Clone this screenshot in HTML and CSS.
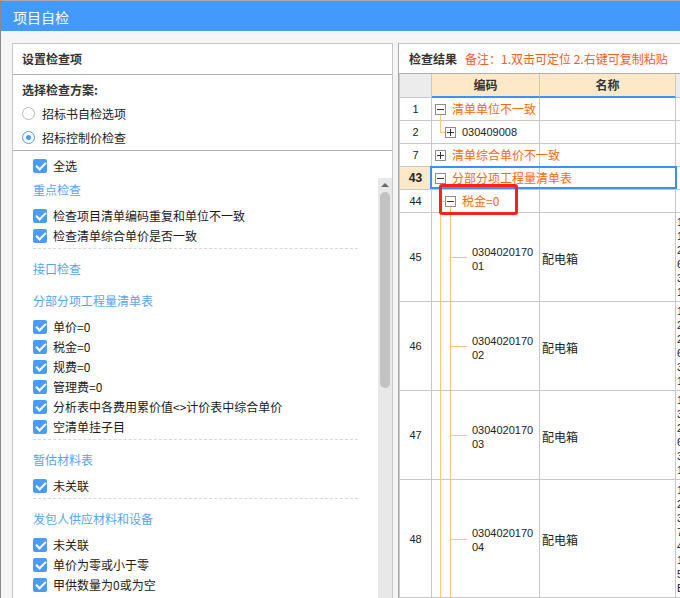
FILE: index.html
```html
<!DOCTYPE html>
<html lang="zh-CN">
<head>
<meta charset="utf-8">
<title>项目自检</title>
<link rel="stylesheet" href="styles.css">
</head>
<body>
<div class="window">
  <div class="titlebar">项目自检</div>
  <div class="main">
    <section class="panel left">
      <div class="panel-head lhead">设置检查项</div>
      <div class="scheme">
        <div class="scheme-title">选择检查方案:</div>
        <label class="radio-row first"><span class="radio"></span>招标书自检选项</label>
        <label class="radio-row"><span class="radio on"></span>招标控制价检查</label>
      </div>
      <div class="all-row">
        <label class="check"><span class="cb"></span>全选</label>
      </div>
      <div class="scroll">
        <div class="scroll-content">
          <div class="group-title">重点检查</div>
          <div class="items">
            <label class="check"><span class="cb"></span>检查项目清单编码重复和单位不一致</label>
            <label class="check"><span class="cb"></span>检查清单综合单价是否一致</label>
          </div>
          <div class="sep"></div>
          <div class="group-title solo">接口检查</div>
          <div class="group-title">分部分项工程量清单表</div>
          <div class="items">
            <label class="check"><span class="cb"></span>单价=0</label>
            <label class="check"><span class="cb"></span>税金=0</label>
            <label class="check"><span class="cb"></span>规费=0</label>
            <label class="check"><span class="cb"></span>管理费=0</label>
            <label class="check"><span class="cb"></span>分析表中各费用累价值&lt;&gt;计价表中综合单价</label>
            <label class="check"><span class="cb"></span>空清单挂子目</label>
          </div>
          <div class="sep"></div>
          <div class="group-title">暂估材料表</div>
          <div class="items">
            <label class="check"><span class="cb"></span>未关联</label>
          </div>
          <div class="sep"></div>
          <div class="group-title">发包人供应材料和设备</div>
          <div class="items">
            <label class="check"><span class="cb"></span>未关联</label>
            <label class="check"><span class="cb"></span>单价为零或小于零</label>
            <label class="check"><span class="cb"></span>甲供数量为0或为空</label>
          </div>
        </div>
        <div class="scrollbar">
          <div class="arrow-up"></div>
          <div class="thumb"></div>
        </div>
      </div>
    </section>

    <section class="panel right">
      <div class="panel-head rhead">检查结果<span class="note">备注：1.双击可定位 2.右键可复制粘贴</span></div>
      <div class="grid">
        <div class="row head">
          <div class="c num"></div>
          <div class="c hcell">编码</div>
          <div class="c hcell">名称</div>
          <div class="c extra"></div>
        </div>

        <div class="row">
          <div class="c num">1</div>
          <div class="c code lv1">
            <i class="vl l1 below"></i>
            <span class="tb"></span><span class="warn">清单单位不一致</span>
          </div>
          <div class="c name"></div>
          <div class="c extra"></div>
        </div>

        <div class="row">
          <div class="c num">2</div>
          <div class="c code lv2">
            <i class="vl l1 upper"></i><i class="hl h1"></i>
            <span class="tb plus"></span><span class="digits">030409008</span>
          </div>
          <div class="c name"></div>
          <div class="c extra"></div>
        </div>

        <div class="row">
          <div class="c num">7</div>
          <div class="c code lv1">
            <span class="tb plus"></span><span class="warn">清单综合单价不一致</span>
          </div>
          <div class="c name"></div>
          <div class="c extra"></div>
        </div>

        <div class="row">
          <div class="c num sel">43</div>
          <div class="c code lv1">
            <i class="vl l1 below"></i>
            <span class="tb"></span><span class="warn">分部分项工程量清单表</span>
          </div>
          <div class="c name"></div>
          <div class="c extra"></div>
        </div>

        <div class="row">
          <div class="c num">44</div>
          <div class="c code lv2">
            <i class="vl l1 full"></i><i class="hl h1"></i><i class="vl l2 below"></i>
            <span class="tb"></span><span class="warn">税金=0</span>
          </div>
          <div class="c name"></div>
          <div class="c extra"></div>
        </div>

        <div class="row tall">
          <div class="c num">45</div>
          <div class="c code leaf">
            <i class="vl l1 full"></i><i class="vl l2 full"></i><i class="hl h2"></i>
            <span class="leaf-code">030402017001</span>
          </div>
          <div class="c name">配电箱</div>
          <div class="c extra"><span>1.XL-1</span><span>1.PZ30</span><span>2.300*400</span><span>6.BV-2.5</span><span>3.M10</span><span>1.1</span></div>
        </div>

        <div class="row tall">
          <div class="c num">46</div>
          <div class="c code leaf">
            <i class="vl l1 full"></i><i class="vl l2 full"></i><i class="hl h2"></i>
            <span class="leaf-code">030402017002</span>
          </div>
          <div class="c name">配电箱</div>
          <div class="c extra"><span>1.XL-2</span><span>2.PZ30</span><span>2.400*500</span><span>6.BV-4</span><span>3.M10</span><span>1.1</span></div>
        </div>

        <div class="row tall">
          <div class="c num">47</div>
          <div class="c code leaf">
            <i class="vl l1 full"></i><i class="vl l2 full"></i><i class="hl h2"></i>
            <span class="leaf-code">030402017003</span>
          </div>
          <div class="c name">配电箱</div>
          <div class="c extra"><span>1.XL-3</span><span>3.PZ30</span><span>2.500*600</span><span>6.BV-6</span><span>3.M12</span><span>1.1</span></div>
        </div>

        <div class="row taller">
          <div class="c num">48</div>
          <div class="c code leaf">
            <i class="vl l1 full"></i><i class="vl l2 full"></i><i class="hl h2"></i>
            <span class="leaf-code">030402017004</span>
          </div>
          <div class="c name">配电箱</div>
          <div class="c extra"><span>1.XL-4</span><span>2.XL-21</span><span>3.600*800</span><span>7.BV-10</span><span>4.M12</span><span>1.10#</span><span>5.2</span><span>B.1</span></div>
        </div>

        <div class="sel-box"></div>
        <div class="red-box"></div>
      </div>
    </section>
  </div>
</div>
</body>
</html>
```

FILE: styles.css
```css
* { box-sizing: border-box; }
html, body { margin: 0; padding: 0; }
body {
  width: 680px;
  height: 598px;
  overflow: hidden;
  font-family: "Noto Sans CJK SC", "Noto Sans", sans-serif;
  font-size: 12px;
  color: #222;
  background: #f5f5f5;
}
.window {
  width: 680px;
  height: 598px;
  border-top: 1px solid #a9a9a9;
  border-left: 1px solid #8a8a8a;
  background: #f5f5f5;
  overflow: hidden;
}
.titlebar {
  height: 30px;
  background: #4499fd;
  color: #fff;
  font-size: 14px;
  line-height: 28px;
  padding: 2px 0 0 12px;
}
.main {
  display: flex;
  gap: 5px;
  height: 567px;
  padding: 12px 0 0 11px;
}
.panel {
  background: #fff;
  border: 1px solid #c6c6c6;
  border-bottom: none;
  flex-shrink: 0;
}
.left {
  width: 381px;
  display: flex;
  flex-direction: column;
}
.right {
  width: 300px;
  border-right: none;
  border-left-color: #a8a8a8;
}
.panel-head {
  font-weight: bold;
  color: #333;
  border-bottom: 1px solid #b0b0b0;
}
.lhead { height: 31px; line-height: 30px; padding-left: 9px; }
.rhead { height: 30px; line-height: 29px; padding-left: 10px; }
.note {
  font-weight: normal;
  color: #ff5a24;
  margin-left: 8px;
}

/* scheme */
.scheme {
  padding: 5px 9px 1px;
  border-bottom: 1px solid #b0b0b0;
}
.scheme-title { line-height: 20px; height: 20px; font-weight: bold; color: #333; }
.radio-row {
  display: flex;
  align-items: center;
  gap: 7px;
  height: 24px;
  color: #222;
}
.radio-row.first { margin-top: 1px; }
.radio {
  width: 13px;
  height: 13px;
  border-radius: 50%;
  border: 1px solid #b8b8b8;
  background: #fff;
  position: relative;
  flex-shrink: 0;
}
.radio.on { border-color: #4a9bfa; }
.radio.on::after {
  content: "";
  position: absolute;
  left: 3px;
  top: 3px;
  width: 5px;
  height: 5px;
  border-radius: 50%;
  background: #4a9bfa;
}

/* checks */
.all-row { padding: 5px 0 2px 20px; }
.check {
  display: flex;
  align-items: center;
  gap: 6px;
  height: 20px;
  line-height: 20px;
  white-space: nowrap;
  color: #1a1a1a;
}
.cb {
  width: 14px;
  height: 14px;
  border-radius: 2px;
  background: #4a9bfa;
  position: relative;
  flex-shrink: 0;
}
.cb::after {
  content: "";
  position: absolute;
  left: 3px;
  top: 3px;
  width: 8px;
  height: 4px;
  border-left: 2px solid #fff;
  border-bottom: 2px solid #fff;
  transform: rotate(-45deg);
}

/* scroll area */
.scroll {
  flex: 1;
  min-height: 0;
  display: flex;
  overflow: hidden;
}
.scroll-content {
  flex: 1;
  padding: 2px 20px 0 20px;
}
.group-title {
  height: 20px;
  line-height: 20px;
  color: #58a3f6;
}
.group-title.solo { margin-bottom: 12px; }
.items { margin-top: 6px; }
.sep {
  border-top: 1px dashed #d8d8d8;
  margin: 2px 0 10px;
}
.scrollbar {
  width: 14px;
  flex-shrink: 0;
  background: #e8e8e8;
  display: flex;
  flex-direction: column;
  align-items: center;
}
.arrow-up {
  margin-top: 5px;
  width: 0;
  height: 0;
  border-left: 4px solid transparent;
  border-right: 4px solid transparent;
  border-bottom: 4px solid #6a6a70;
}
.thumb {
  margin-top: 5px;
  width: 10px;
  height: 196px;
  border-radius: 5px;
  background: #c2c2c2;
}

/* grid */
.grid { position: relative; }
.row {
  display: grid;
  grid-template-columns: 33px 108px 136px 1fr;
  height: 23px;
}
.row.tall { height: 89px; }
.row.taller { height: 118px; }
.c {
  border-right: 1px solid #c8c8c8;
  border-bottom: 1px solid #c8c8c8;
  overflow: visible;
}
.num {
  border-left: 1px solid #c8c8c8;
  display: flex;
  align-items: center;
  justify-content: center;
  font-family: "Liberation Sans", sans-serif;
  font-size: 11px;
  color: #222;
}
.num.sel { background: #fde8c8; font-weight: bold; font-size: 12px; }
.row.head { height: 24px; }
.row.head .c {
  font-weight: bold;
  color: #333;
  text-align: center;
  line-height: 22px;
}
.row.head .num, .row.head .extra { background: #ececec; }
.row.head .hcell {
  background: #fde8c8;
  border-bottom: 2px solid #3d93f5;
}
.code { position: relative; display: flex; align-items: center; }
.lv1 { padding-left: 3px; }
.lv2 { padding-left: 13px; }
.leaf { padding-left: 40px; }
.tb {
  width: 11px;
  height: 11px;
  border: 1px solid #8c8c8c;
  background: #fff;
  position: relative;
  flex-shrink: 0;
  margin-right: 6px;
}
.tb::before {
  content: "";
  position: absolute;
  left: 1px;
  right: 1px;
  top: 4px;
  height: 1px;
  background: #333;
}
.tb.plus::after {
  content: "";
  position: absolute;
  top: 1px;
  bottom: 1px;
  left: 4px;
  width: 1px;
  background: #333;
}
.warn { color: #fa6a0c; white-space: nowrap; line-height: 20px; }
.digits {
  font-family: "Liberation Sans", sans-serif;
  font-size: 11px;
  color: #222;
}
.leaf-code {
  font-family: "Liberation Sans", sans-serif;
  font-size: 11px;
  color: #222;
  width: 64px;
  word-break: break-all;
  line-height: 14px;
  margin-top: 3px;
}
.vl, .hl { position: absolute; background: #fbc57a; }
.vl { width: 1px; }
.vl.l1 { left: 8px; }
.vl.l2 { left: 18px; }
.vl.full { top: 0; bottom: -1px; }
.vl.upper { top: 0; height: 12px; }
.vl.below { top: 17px; bottom: -1px; }
.hl { height: 1px; }
.hl.h1 { left: 8px; width: 5px; top: 11px; }
.hl.h2 { left: 18px; width: 17px; top: 50%; }
.name {
  display: flex;
  align-items: center;
  padding-left: 2px;
  padding-top: 2px;
  color: #222;
}
.extra {
  display: flex;
  flex-direction: column;
  justify-content: center;
  padding-left: 1px;
  font-family: "Liberation Sans", sans-serif;
  font-size: 11px;
  line-height: 14px;
  white-space: nowrap;
  overflow: hidden;
  color: #222;
}
.sel-box {
  position: absolute;
  top: 92px;
  left: 31px;
  width: 247px;
  height: 23px;
  border: 2px solid #3a91f5;
}
.red-box {
  position: absolute;
  top: 110px;
  left: 40px;
  width: 79px;
  height: 31px;
  border: 3px solid #ff1f1f;
  border-radius: 3px;
}
```
